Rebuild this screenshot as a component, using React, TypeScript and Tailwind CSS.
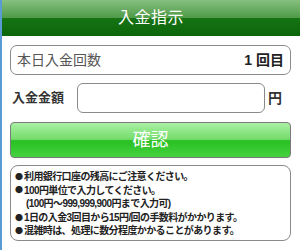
const FONT = "font-['Liberation_Sans','Noto_Sans_CJK_JP',sans-serif]"

const NOTES: { text: string; bullet: boolean }[] = [
  { text: '利用銀行口座の残高にご注意ください。', bullet: true },
  { text: '100円単位で入力してください。', bullet: true },
  { text: '(100円～999,999,900円まで入力可)', bullet: false },
  { text: '1日の入金3回目から15円/回の手数料がかかります。', bullet: true },
  { text: '混雑時は、処理に数分程度かかることがあります。', bullet: true },
]

export default function App() {
  return (
    <div className={`flex w-[300px] h-[250px] bg-white overflow-hidden ${FONT}`}>
      {/* 左端の帯 */}
      <div className="w-[2px] bg-[#5b9bd5]" />

      <div className="flex-1 flex flex-col">
        {/* ヘッダー */}
        <div className="h-[36px] flex items-center justify-center bg-[linear-gradient(#86bf7f,#4e9a47_50%,#167414_50%,#0c650a)]">
          <span className="text-[16px] text-white tracking-[0.5px]">入金指示</span>
        </div>

        <div className="pl-[8px] pr-[9px]">
          {/* 本日入金回数 */}
          <div className="mt-[9px] h-[30px] flex items-center justify-between border border-[#8a8a8a] rounded-[7px] px-[6px]">
            <span className="text-[14px] text-[#555]">本日入金回数</span>
            <span className="text-[14px] font-bold text-[#222]">1 回目</span>
          </div>

          {/* 入金金額 */}
          <div className="mt-[8px] h-[30px] flex items-center">
            <span className="w-[67px] pl-[2px] text-[13px] font-bold text-[#333]">入金金額</span>
            <input
              type="text"
              className="w-[188px] h-[30px] border border-[#8a8a8a] rounded-[6px] outline-none px-2 text-sm"
            />
            <span className="ml-[3px] text-[14px] font-bold text-[#333]">円</span>
          </div>

          {/* 確認ボタン */}
          <button
            type="button"
            className="mt-[9px] w-full h-[36px] rounded-[4px] border border-[#7a7a7a] bg-[linear-gradient(#aaf0a4,#74dc6c_48%,#28c022_52%,#46d240)] text-white text-[18px]"
          >
            確認
          </button>

          {/* 注意事項 */}
          <div className="mt-[7px] h-[76px] border border-[#8a8a8a] rounded-[8px] pl-[4px] pt-[4px]">
            {NOTES.map((n) => (
              <div
                key={n.text}
                className={'flex items-center text-[10px] tracking-[-0.6px] leading-[13.6px] font-bold text-[#222] whitespace-nowrap ' + (n.bullet ? '' : 'pl-[11px]')}
              >
                {n.bullet && (
                  <span className="inline-block w-[8px] mr-[1px] text-[8px] leading-none font-['Noto_Sans_CJK_JP',sans-serif]">●</span>
                )}
                <span>{n.text}</span>
              </div>
            ))}
          </div>
        </div>
      </div>
    </div>
  )
}
